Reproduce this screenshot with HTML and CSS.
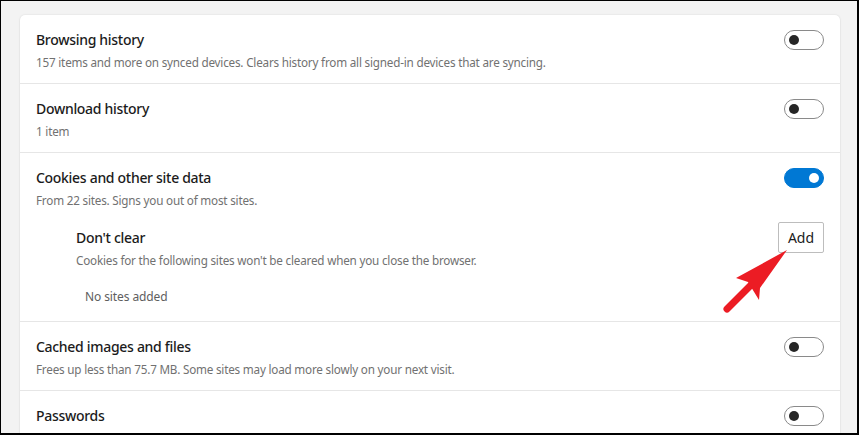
FILE: index.html
```html
<!DOCTYPE html>
<html lang="en">
<head>
    <meta charset="UTF-8">
    <meta name="viewport" content="width=device-width, initial-scale=1.0">
    <title>Clear browsing data</title>
    <link rel="stylesheet" href="styles.css">
</head>
<body>
    <div class="card">
        <div class="row">
            <div class="row-head">
                <div>
                    <div class="title">Browsing history</div>
                    <div class="desc">157 items and more on synced devices. Clears history from all signed-in devices that are syncing.</div>
                </div>
                <span class="toggle"></span>
            </div>
        </div>

        <div class="row">
            <div class="row-head">
                <div>
                    <div class="title">Download history</div>
                    <div class="desc">1 item</div>
                </div>
                <span class="toggle"></span>
            </div>
        </div>

        <div class="row">
            <div class="row-head">
                <div>
                    <div class="title">Cookies and other site data</div>
                    <div class="desc">From 22 sites. Signs you out of most sites.</div>
                </div>
                <span class="toggle on"></span>
            </div>

            <!-- sites kept when the browser closes -->
            <div class="sub">
                <div class="sub-head">
                    <div>
                        <div class="title">Don't clear</div>
                        <div class="desc">Cookies for the following sites won't be cleared when you close the browser.</div>
                    </div>
                    <button class="add-btn">Add</button>
                </div>
                <div class="empty">No sites added</div>
            </div>
        </div>

        <div class="row">
            <div class="row-head">
                <div>
                    <div class="title">Cached images and files</div>
                    <div class="desc">Frees up less than 75.7 MB. Some sites may load more slowly on your next visit.</div>
                </div>
                <span class="toggle"></span>
            </div>
        </div>

        <div class="row">
            <div class="row-head">
                <div>
                    <div class="title">Passwords</div>
                    <div class="desc">3 passwords for linkedin.com, microsoft.com, and 1 more (synced)</div>
                </div>
                <span class="toggle"></span>
            </div>
        </div>
    </div>

    <svg class="arrow" width="859" height="435" viewBox="0 0 859 435">
        <line x1="727" y1="309" x2="752" y2="284" stroke="#ec1c24" stroke-width="7" stroke-linecap="round"/>
        <polygon points="787,250 736,278 748,282 759,300 760,288" fill="#ec1c24"/>
    </svg>
</body>
</html>
```

FILE: styles.css
```css
* {
    box-sizing: border-box;
}

html {
    background: #000;
}

body {
    margin: 0;
    height: 435px;
    overflow: hidden;
    position: relative;
    background-color: #f3f3f3;
    border-style: solid;
    border-color: #000;
    border-width: 1px 2px 2px 1px;
    font-family: "Noto Sans", "Open Sans", sans-serif;
    color: #1b1b1b;
}

.card {
    margin: 14px 0 0 19px;
    width: 820px;
    background: #fff;
    border-radius: 5px;
    box-shadow: 0 0 2px rgba(0, 0, 0, 0.12), 0 1px 2px rgba(0, 0, 0, 0.06);
}

.row {
    padding: 14px 16px 11px 16px;
    border-bottom: 1px solid #e6e6e6;
}

.row-head,
.sub-head {
    display: flex;
    justify-content: space-between;
    align-items: flex-start;
}

.title {
    font-size: 14px;
    font-weight: 500;
    line-height: 22px;
    letter-spacing: -0.3px;
}

.desc {
    margin-top: 1px;
    font-size: 11.7px;
    line-height: 20px;
    color: #717171;
    letter-spacing: -0.2px;
}

.toggle {
    position: relative;
    flex: none;
    width: 40px;
    height: 20px;
    margin-top: 1px;
    border: 1px solid #8a8a8a;
    border-radius: 10px;
    background: #fff;
}

.toggle::after {
    content: "";
    position: absolute;
    left: 4px;
    top: 4px;
    width: 10px;
    height: 10px;
    border-radius: 50%;
    background: #262626;
}

.toggle.on {
    background: #0078d4;
    border-color: #0078d4;
}

.toggle.on::after {
    left: auto;
    right: 4px;
    background: #fff;
}

.sub {
    margin: 17px 0 3px 40px;
}

.add-btn {
    margin-top: -5px;
    width: 46px;
    height: 31px;
    padding: 0;
    border: 1px solid #bdbdbd;
    border-radius: 2px;
    background: #fff;
    font-family: inherit;
    font-size: 14px;
    color: #1b1b1b;
}

.empty {
    margin-top: 17px;
    padding-left: 9px;
    font-size: 12px;
    line-height: 20px;
    color: #5e5e5e;
    letter-spacing: -0.1px;
}

.arrow {
    position: absolute;
    left: -1px;
    top: -1px;
    pointer-events: none;
}
```
